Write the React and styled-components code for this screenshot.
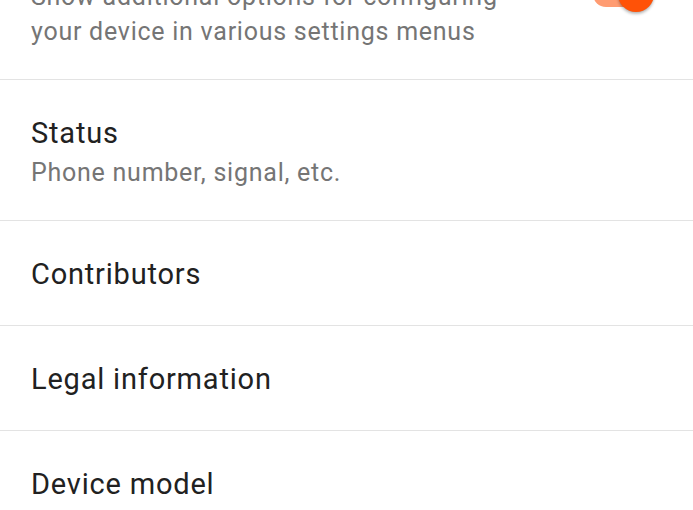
import React from "react";
import styled, { createGlobalStyle } from "styled-components";

const GlobalStyle = createGlobalStyle`
  html, body {
    margin: 0;
    padding: 0;
    background: #ffffff;
  }
  body {
    font-family: Roboto, "Noto Sans", "Liberation Sans", sans-serif;
    -webkit-font-smoothing: antialiased;
  }
`;

const Viewport = styled.div`
  width: 693px;
  height: 510px;
  overflow: hidden;
  background: #ffffff;
`;

/* the list is scrolled: the first preference sits partly above the top edge */
const ScrollContent = styled.div`
  display: flex;
  flex-direction: column;
  margin-top: -96px;
`;

const Row = styled.div`
  box-sizing: border-box;
  min-height: 105px;
  display: flex;
  align-items: ${(p) => (p.$center ? "center" : "flex-start")};
  gap: 50px;
  padding: 34px 39px 30px 31px;
  border-bottom: 1px solid #e3e3e3;
`;

const TextColumn = styled.div`
  flex: 1;
  min-width: 0;
  display: flex;
  flex-direction: column;
`;

const Title = styled.div`
  font-size: 29px;
  line-height: 38px;
  letter-spacing: 0.8px;
  color: #212121;
`;

const Summary = styled.div`
  margin-top: 3px;
  font-size: 25px;
  line-height: 35px;
  letter-spacing: 0.75px;
  color: #757575;
`;

const Switch = styled.div`
  position: relative;
  flex: none;
  width: 61px;
  height: 36px;
`;

const Track = styled.div`
  position: absolute;
  left: 0;
  top: 5px;
  width: 56px;
  height: 26px;
  border-radius: 13px;
  background: ${(p) => (p.$on ? "#ff9c72" : "#bdbdbd")};
`;

const Thumb = styled.div`
  position: absolute;
  top: 0;
  ${(p) => (p.$on ? "right: 0;" : "left: 0;")}
  width: 36px;
  height: 36px;
  border-radius: 50%;
  background: ${(p) => (p.$on ? "#ff5207" : "#f5f5f5")};
  box-shadow: 0 2px 3px rgba(0, 0, 0, 0.28), 0 0 1px rgba(0, 0, 0, 0.12);
`;

const items = [
  {
    title: "Advanced settings",
    summary: "Show additional options for configuring your device in various settings menus",
    toggle: true,
  },
  { title: "Status", summary: "Phone number, signal, etc." },
  { title: "Contributors" },
  { title: "Legal information" },
  { title: "Device model" },
];

export default function App() {
  return (
    <>
      <GlobalStyle />
      <Viewport>
        <ScrollContent>
          {items.map((item) => (
            <Row key={item.title} $center={item.toggle}>
              <TextColumn>
                <Title>{item.title}</Title>
                {item.summary && <Summary>{item.summary}</Summary>}
              </TextColumn>
              {item.toggle && (
                <Switch role="switch" aria-checked="true">
                  <Track $on />
                  <Thumb $on />
                </Switch>
              )}
            </Row>
          ))}
        </ScrollContent>
      </Viewport>
    </>
  );
}
